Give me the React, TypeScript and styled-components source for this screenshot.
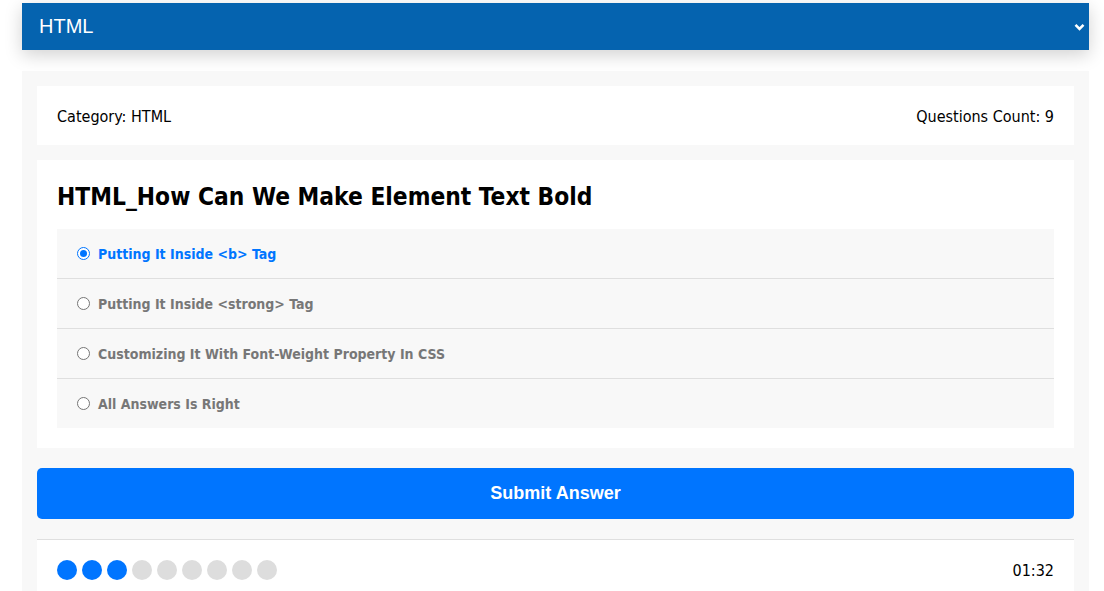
import React from "react";
import styled, { createGlobalStyle } from "styled-components";

const Global = createGlobalStyle`
  html, body { margin: 0; padding: 0; background: #fff; }
  * { box-sizing: border-box; }
  body { font-family: "DejaVu Sans Condensed", "DejaVu Sans", sans-serif; }
`;

const Page = styled.div`
  padding: 3px 15px 0 22px;
`;

const SelectBar = styled.div`
  height: 47px;
  background: #0563af;
  color: #fff;
  display: flex;
  align-items: center;
  justify-content: space-between;
  padding: 0 4px 0 17px;
  font-family: "Liberation Sans", Arial, sans-serif;
  font-size: 20px;
  box-shadow: 0 5px 18px rgba(0, 0, 0, 0.18);
`;

const Chevron = styled.svg`
  display: block;
  margin-top: 1px;
`;

const Container = styled.div`
  margin-top: 21px;
  background: #f8f8f8;
  padding: 15px 15px 0;
`;

const InfoCard = styled.div`
  background: #fff;
  padding: 21px 20px 19px;
  display: flex;
  justify-content: space-between;
  font-size: 16px;
  line-height: 19px;
  color: #000;
`;

const QuestionCard = styled.div`
  background: #fff;
  padding: 20px;
  margin-top: 15px;
`;

const Title = styled.h2`
  margin: 0 0 18px;
  padding-top: 2px;
  font-size: 24.3px;
  line-height: 29px;
  font-weight: bold;
  color: #000;
`;

const AnswerList = styled.ul`
  list-style: none;
  margin: 0;
  padding: 0;
  background: #f8f8f8;
`;

const AnswerRow = styled.li<{ $last?: boolean }>`
  height: ${(p) => (p.$last ? "49px" : "50px")};
  padding: 0 20px;
  display: flex;
  align-items: center;
  border-bottom: ${(p) => (p.$last ? "none" : "1px solid #dfdfdf")};
`;

const Radio = styled.span<{ $checked?: boolean }>`
  width: 13px;
  height: 13px;
  border-radius: 50%;
  border: 1px solid ${(p) => (p.$checked ? "#0075ff" : "#767676")};
  background: #fff;
  margin-right: 8px;
  display: flex;
  align-items: center;
  justify-content: center;
  flex-shrink: 0;
  &::after {
    content: "";
    width: 7px;
    height: 7px;
    border-radius: 50%;
    background: ${(p) => (p.$checked ? "#0075ff" : "transparent")};
  }
`;

const AnswerLabel = styled.span<{ $checked?: boolean }>`
  font-size: 14px;
  font-weight: bold;
  color: ${(p) => (p.$checked ? "#0075ff" : "#777")};
`;

const SubmitButton = styled.button`
  display: block;
  width: 100%;
  height: 51px;
  margin-top: 20px;
  border: none;
  border-radius: 5px;
  background: #0075ff;
  color: #fff;
  font-family: "Liberation Sans", Arial, sans-serif;
  font-size: 18px;
  font-weight: bold;
  cursor: pointer;
`;

const Footer = styled.div`
  margin-top: 20px;
  border-top: 1px solid #dfdfdf;
  background: #fff;
  padding: 20px;
  display: flex;
  justify-content: space-between;
  align-items: center;
`;

const Bullets = styled.div`
  display: flex;
  gap: 5px;
`;

const Bullet = styled.span<{ $on?: boolean }>`
  width: 20px;
  height: 20px;
  border-radius: 50%;
  background: ${(p) => (p.$on ? "#0075ff" : "#ddd")};
`;

const Timer = styled.div`
  font-size: 16px;
  color: #000;
`;

const answers = [
  "Putting It Inside <b> Tag",
  "Putting It Inside <strong> Tag",
  "Customizing It With Font-Weight Property In CSS",
  "All Answers Is Right",
];

export default function App() {
  return (
    <>
      <Global />
      <Page>
        <SelectBar>
          <span>HTML</span>
          <Chevron width="11" height="8" viewBox="0 0 11 8">
            <path d="M1.5 1.8 L5.5 5.8 L9.5 1.8" fill="none" stroke="#fff" strokeWidth="2.6" />
          </Chevron>
        </SelectBar>
        <Container>
          <InfoCard>
            <span>Category: HTML</span>
            <span>Questions Count: 9</span>
          </InfoCard>
          <QuestionCard>
            <Title>HTML_How Can We Make Element Text Bold</Title>
            <AnswerList>
              {answers.map((a, i) => (
                <AnswerRow key={i} $last={i === answers.length - 1}>
                  <Radio $checked={i === 0} />
                  <AnswerLabel $checked={i === 0}>{a}</AnswerLabel>
                </AnswerRow>
              ))}
            </AnswerList>
          </QuestionCard>
          <SubmitButton>Submit Answer</SubmitButton>
          <Footer>
            <Bullets>
              {Array.from({ length: 9 }).map((_, i) => (
                <Bullet key={i} $on={i < 3} />
              ))}
            </Bullets>
            <Timer>01:32</Timer>
          </Footer>
        </Container>
      </Page>
    </>
  );
}
